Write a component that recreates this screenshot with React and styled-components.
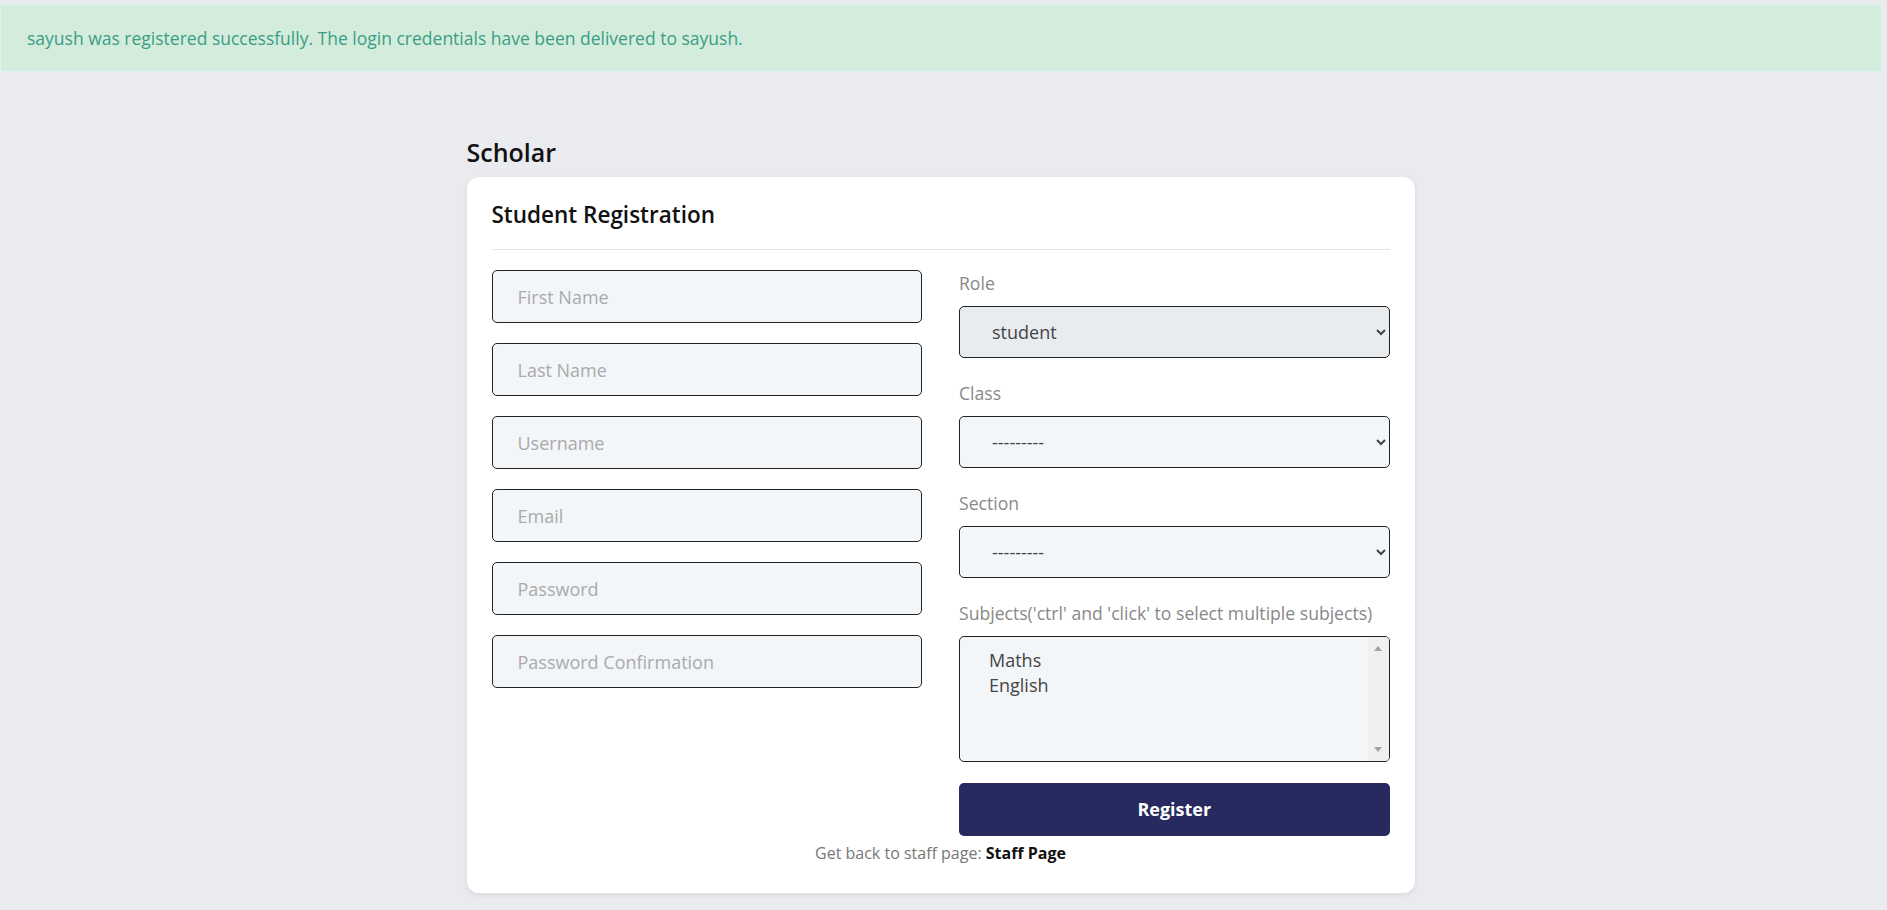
import React, { useState } from 'react';
import styled, { createGlobalStyle } from 'styled-components';

const GlobalStyle = createGlobalStyle`
  * {
    box-sizing: border-box;
  }
  body {
    margin: 0;
    background-color: #e9ebef;
    font-family: "Open Sans", "Noto Sans", sans-serif;
  }
`;

const Page = styled.div`
  margin-right: 6px;
  padding-bottom: 40px;
`;

const Alert = styled.div`
  margin: 5px 0 0 1px;
  padding: 19px 25px;
  background-color: #d4ecdc;
  border: 1px solid #c4f4e4;
  color: #3a9e84;
  font-size: 17.5px;
  line-height: 26px;
`;

const Wrapper = styled.div`
  width: 948px;
  margin: 66px auto 0;
`;

const Brand = styled.h2`
  margin: 0 0 10px;
  font-size: 25px;
  line-height: 30px;
  font-weight: 600;
  color: #111;
`;

const Card = styled.div`
  background-color: #fff;
  border-radius: 12px;
  padding: 24px 25px 28px;
  box-shadow: 0 2px 6px rgba(0, 0, 0, 0.08);
`;

const Title = styled.h3`
  margin: 0;
  font-size: 22.5px;
  line-height: 28px;
  font-weight: 600;
  color: #111;
`;

const Divider = styled.hr`
  border: none;
  border-top: 1px solid #e5e5e5;
  margin: 20px 0;
`;

const Form = styled.form`
  display: grid;
  grid-template-columns: 1fr 1fr;
  column-gap: 37px;
`;

const Column = styled.div`
  display: flex;
  flex-direction: column;
  gap: ${(props) => props.gap || 20}px;
`;

const Input = styled.input`
  height: 53px;
  width: 100%;
  padding: 0 25px;
  border: 1px solid #222;
  border-radius: 5px;
  background-color: #f3f6f9;
  font-family: inherit;
  font-size: 18px;
  color: #444;
  outline: none;
  &::placeholder {
    color: #aaa;
  }
`;

const Field = styled.div`
  display: flex;
  flex-direction: column;
`;

const Label = styled.label`
  font-size: 17.6px;
  line-height: 26.4px;
  color: #888;
  margin-bottom: 9.5px;
`;

const Select = styled.select`
  height: 52px;
  width: 100%;
  padding: 0 16px 0 28px;
  border: 1px solid #222;
  border-radius: 5px;
  background-color: ${(props) => (props.disabled ? '#e9ecef' : '#f3f6f9')};
  font-family: inherit;
  font-size: 18px;
  color: #444;
  opacity: 1;
  outline: none;
`;

const ListBox = styled.div`
  position: relative;
`;

const MultiSelect = styled.select`
  display: block;
  height: 126px;
  width: 100%;
  padding: 11px 22px 11px 27px;
  border: 1px solid #222;
  border-radius: 5px;
  background-color: #f3f6f9;
  font-family: inherit;
  font-size: 18px;
  color: #444;
  overflow-y: scroll;
  outline: none;
`;

const ScrollTrack = styled.div`
  position: absolute;
  top: 1px;
  right: 1px;
  bottom: 1px;
  width: 21px;
  background-color: #f0f0f0;
  border-radius: 0 4px 4px 0;
  display: flex;
  flex-direction: column;
  justify-content: space-between;
  align-items: center;
  padding: 9px 0;
  pointer-events: none;
`;

const Arrow = styled.span`
  width: 0;
  height: 0;
  border-left: 4.5px solid transparent;
  border-right: 4.5px solid transparent;
  ${(props) =>
    props.down
      ? 'border-top: 5px solid #a3a3a3;'
      : 'border-bottom: 5px solid #a3a3a3;'}
`;

const Button = styled.button`
  height: 53px;
  width: 100%;
  margin-top: -1px;
  border: none;
  border-radius: 5px;
  background-color: #272a5f;
  color: #fff;
  font-family: inherit;
  font-size: 18px;
  font-weight: 700;
  cursor: pointer;
`;

const Footer = styled.p`
  margin: 5px 0 0;
  text-align: center;
  font-size: 16px;
  line-height: 24px;
  color: #777;
`;

const FooterLink = styled.a`
  color: #111;
  font-weight: 700;
  text-decoration: none;
`;

const App = () => {
  const [subjects, setSubjects] = useState([]);

  const leftFields = [
    'First Name',
    'Last Name',
    'Username',
    'Email',
    'Password',
    'Password Confirmation',
  ];

  return (
    <Page>
      <GlobalStyle />
      <Alert>
        sayush was registered successfully. The login credentials have been delivered to sayush.
      </Alert>
      <Wrapper>
        <Brand>Scholar</Brand>
        <Card>
          <Title>Student Registration</Title>
          <Divider />
          <Form onSubmit={(e) => e.preventDefault()}>
            <Column>
              {leftFields.map((f) => (
                <Input
                  key={f}
                  placeholder={f}
                  type={f.startsWith('Password') ? 'password' : 'text'}
                />
              ))}
            </Column>
            <Column gap={22}>
              <Field>
                <Label>Role</Label>
                <Select disabled defaultValue="student">
                  <option value="student">student</option>
                </Select>
              </Field>
              <Field>
                <Label>Class</Label>
                <Select defaultValue="">
                  <option value="">---------</option>
                </Select>
              </Field>
              <Field>
                <Label>Section</Label>
                <Select defaultValue="">
                  <option value="">---------</option>
                </Select>
              </Field>
              <Field>
                <Label>Subjects('ctrl' and 'click' to select multiple subjects)</Label>
                <ListBox>
                  <MultiSelect
                    multiple
                    value={subjects}
                    onChange={(e) =>
                      setSubjects(Array.from(e.target.selectedOptions).map((o) => o.value))
                    }
                  >
                    <option value="maths">Maths</option>
                    <option value="english">English</option>
                  </MultiSelect>
                  <ScrollTrack>
                    <Arrow />
                    <Arrow down />
                  </ScrollTrack>
                </ListBox>
              </Field>
              <Button type="submit">Register</Button>
            </Column>
          </Form>
          <Footer>
            Get back to staff page: <FooterLink href="#">Staff Page</FooterLink>
          </Footer>
        </Card>
      </Wrapper>
    </Page>
  );
};

export default App;
